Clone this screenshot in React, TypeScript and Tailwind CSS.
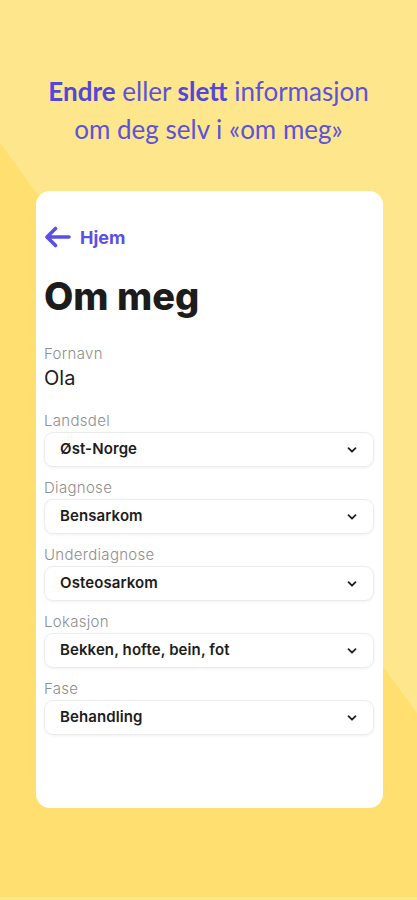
import React from "react";

const fields = [
  { label: "Landsdel", value: "Øst-Norge" },
  { label: "Diagnose", value: "Bensarkom" },
  { label: "Underdiagnose", value: "Osteosarkom" },
  { label: "Lokasjon", value: "Bekken, hofte, bein, fot" },
  { label: "Fase", value: "Behandling" },
];

function Chevron() {
  return (
    <svg width="12" height="12" viewBox="0 0 12 12" fill="none">
      <path d="M2.5 4.2 L6 7.7 L9.5 4.2" stroke="#1f1f1f" strokeWidth="1.8" strokeLinecap="round" strokeLinejoin="round" />
    </svg>
  );
}

export default function App() {
  return (
    <div className="relative w-[417px] h-[900px] overflow-hidden bg-[#FFDF70]">
      <svg className="absolute inset-0" width="417" height="900" viewBox="0 0 417 900">
        <polygon points="0,0 417,0 417,713 0,143" fill="#FEE68C" />
        <rect x="0" y="897" width="417" height="3" fill="#FEE68C" />
      </svg>
      <div className="relative flex flex-col items-center">
        <div className="pt-[72px] text-center text-[26px] leading-[38px] text-[#5D52DA] font-['Lato','Noto_Sans',sans-serif]">
          <div>
            <span className="font-bold text-[#5247D8]">Endre</span> eller <span className="font-bold text-[#5247D8]">slett</span> informasjon
          </div>
          <div>om deg selv i «om meg»</div>
        </div>
        <div className="mt-[43px] ml-[2px] w-[347px] h-[617px] bg-white rounded-[14px] px-[8px] pt-[31px] font-['Inter','Noto_Sans',sans-serif]">
          <div className="flex items-center gap-[9px] h-[30px]">
            <svg width="27" height="22" viewBox="0 0 27 22" fill="none">
              <path d="M25 11 H3 M11.5 2.5 L3 11 L11.5 19.5" stroke="#5B4FE6" strokeWidth="3.6" strokeLinecap="round" strokeLinejoin="round" />
            </svg>
            <span className="text-[18px] font-bold text-[#5B4FE6]">Hjem</span>
          </div>
          <h1 className="mt-[22px] text-[38px] leading-[44px] font-extrabold text-[#1c1c1c]">Om meg</h1>
          <div className="mt-[27px] text-[15px] leading-[18px] font-light tracking-[0.3px] text-[#8e8e8e]">Fornavn</div>
          <div className="mt-[3px] text-[20px] leading-[24px] text-[#1c1c1c]">Ola</div>
          <div className="mt-[22px] flex flex-col gap-[12px]">
            {fields.map((f) => (
              <div key={f.label} className="flex flex-col">
                <div className="text-[15px] leading-[18px] font-light tracking-[0.3px] text-[#8e8e8e]">{f.label}</div>
                <div className="mt-[2px] mr-[1px] h-[35px] rounded-[9px] border border-[#ececec] shadow-[0_1px_3px_rgba(0,0,0,0.06)] flex items-center justify-between pl-[15px] pr-[15px]">
                  <span className="text-[15px] font-semibold tracking-[0.1px] text-[#1c1c1c]">{f.value}</span>
                  <Chevron />
                </div>
              </div>
            ))}
          </div>
        </div>
      </div>
    </div>
  );
}
